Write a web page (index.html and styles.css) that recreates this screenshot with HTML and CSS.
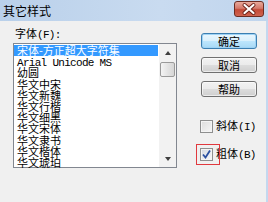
FILE: index.html
```html
<!DOCTYPE html>
<html>
<head>
<meta charset="utf-8">
<link rel="stylesheet" href="styles.css">
</head>
<body>
<div class="window">
  <div class="titlebar">
    <span class="title">其它样式</span>
    <div class="close">
      <svg width="30" height="16" viewBox="0 0 30 16">
        <path d="M10.5 4 L19.5 12 M19.5 4 L10.5 12" stroke="#6b2218" stroke-width="4" stroke-linecap="round"/>
        <path d="M10.5 4 L19.5 12 M19.5 4 L10.5 12" stroke="#ffffff" stroke-width="2.2" stroke-linecap="round"/>
      </svg>
    </div>
  </div>
  <div class="client">
    <div class="left">
      <div class="label">字体<span class="latin">(F):</span></div>
      <div class="listbox">
        <ul class="items">
          <li class="sel">宋体-方正超大字符集</li>
          <li><span class="latin">Arial Unicode MS</span></li>
          <li>幼圆</li>
          <li>华文中宋</li>
          <li>华文新魏</li>
          <li>华文行楷</li>
          <li>华文细黑</li>
          <li>华文宋体</li>
          <li>华文隶书</li>
          <li>华文楷体</li>
          <li>华文琥珀</li>
        </ul>
        <div class="scrollbar">
          <div class="sb-btn"><span class="tri-up"></span></div>
          <div class="track"><div class="thumb"></div></div>
          <div class="sb-btn"><span class="tri-down"></span></div>
        </div>
      </div>
    </div>
    <div class="right">
      <div class="btn default">确定</div>
      <div class="btn">取消</div>
      <div class="btn">帮助</div>
      <div class="check first"><span class="box"></span><span class="ctext">斜体<span class="latin">(I)</span></span></div>
      <div class="check second">
        <span class="box checked">
          <svg width="11" height="11" viewBox="0 0 11 11"><path d="M2 5.5 L4.5 8.5 L9 1.5" fill="none" stroke="#2a4fa0" stroke-width="1.8"/></svg>
          <span class="mark"></span>
        </span>
        <span class="ctext">粗体<span class="latin">(B)</span></span>
      </div>
    </div>
  </div>
</div>
</body>
</html>
```
FILE: styles.css
```css
html, body {
  margin: 0;
  padding: 0;
}
body {
  font-family: "Noto Sans CJK SC", sans-serif;
  font-size: 11px;
  color: #000;
}
.window {
  width: 268px;
  height: 202px;
  overflow: hidden;
  background: #c4d8ef;
  display: flex;
  flex-direction: column;
}
.titlebar {
  height: 21px;
  flex: none;
  display: flex;
  align-items: center;
  justify-content: space-between;
  background: linear-gradient(to right, #b9d0ea, #c9dbf0 60%, #c0d5ed);
  padding-left: 3px;
  padding-right: 4px;
}
.title {
  font-size: 12px;
  line-height: 14px;
  margin-top: 1px;
}
.close {
  width: 28px;
  height: 14px;
  margin-top: -3px;
  border: 1px solid #6b2c22;
  border-radius: 3px;
  background: linear-gradient(#e9aa9c, #d4786a 45%, #c44a37 55%, #cf6450);
  overflow: hidden;
  display: flex;
  align-items: center;
  justify-content: center;
}
.close svg {
  flex: none;
}
.client {
  flex: 1;
  background: #f0f0f0;
  margin-right: 2px;
  display: flex;
  padding-top: 6px;
}
.left {
  padding-left: 13px;
  display: flex;
  flex-direction: column;
}
.latin {
  font-family: "Liberation Mono", monospace;
  letter-spacing: -0.7px;
}
.label {
  margin-left: 2px;
  line-height: 12px;
  height: 12px;
  margin-bottom: 4px;
}
.listbox {
  width: 162px;
  height: 123px;
  border: 1px solid #828790;
  background: #fff;
  display: flex;
}
.items {
  list-style: none;
  margin: 0;
  padding: 1px 1px 0 0;
  width: 144px;
  flex: none;
}
.items li {
  height: 11.2px;
  line-height: 11.2px;
  padding-left: 3px;
  white-space: nowrap;
}
.items li.sel {
  background: #3399ff;
  color: #fff;
}
.scrollbar {
  width: 17px;
  flex: none;
  display: flex;
  flex-direction: column;
  background: #f2f2f2;
}
.sb-btn {
  height: 17px;
  flex: none;
  display: flex;
  align-items: center;
  justify-content: center;
}
.tri-up {
  width: 0;
  height: 0;
  border-left: 3.5px solid transparent;
  border-right: 3.5px solid transparent;
  border-bottom: 4px solid #404040;
}
.tri-down {
  width: 0;
  height: 0;
  border-left: 3.5px solid transparent;
  border-right: 3.5px solid transparent;
  border-top: 4px solid #404040;
}
.track {
  flex: 1;
  padding: 1px 1px 0 1px;
}
.thumb {
  height: 13px;
  border: 1px solid #9a9a9a;
  border-radius: 2px;
  background: linear-gradient(to right, #f4f4f4, #e4e4e4 50%, #d6d6d6);
}
.right {
  margin-left: 24px;
  margin-top: 6px;
  display: flex;
  flex-direction: column;
}
.btn {
  width: 54px;
  height: 14px;
  border: 1px solid #707070;
  border-radius: 3px;
  background: linear-gradient(#f2f2f2, #ebebeb 50%, #dddddd 50%, #cfcfcf);
  text-align: center;
  line-height: 14px;
  margin-bottom: 8px;
  box-shadow: inset 0 0 0 1px rgba(255,255,255,0.6);
}
.btn.default {
  border-color: #3c7fb1;
  background: linear-gradient(#eaf6fd, #d9f0fc 50%, #bee6fd 50%, #a7d9f5);
  box-shadow: inset 0 0 0 1px #9fd3f5;
}
.check {
  display: flex;
  align-items: center;
  margin-left: -1px;
  height: 13px;
  position: relative;
}
.check.first {
  margin-top: 15px;
}
.check.second {
  margin-top: 15px;
}
.box {
  width: 11px;
  height: 11px;
  border: 1px solid #8e8f8f;
  background: linear-gradient(135deg, #dcdcdc, #f6f6f6);
  box-shadow: inset 0 0 0 1px #f4f4f4;
  flex: none;
  position: relative;
  display: flex;
  align-items: center;
  justify-content: center;
}
.box.checked {
  background: linear-gradient(135deg, #d4d8e0, #f8f8fa);
}
.box svg {
  flex: none;
}
.mark {
  position: absolute;
  left: -5px;
  top: -5px;
  width: 22px;
  height: 19px;
  border: 1px solid #e0393e;
}
.ctext {
  margin-left: 3px;
  line-height: 13px;
}
```
